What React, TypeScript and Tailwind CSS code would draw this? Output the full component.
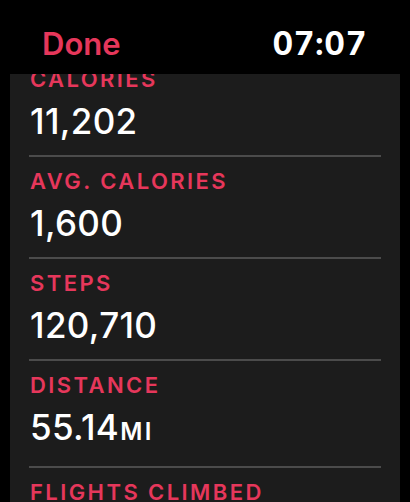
import React from "react";

const rows: { label: string; value: string; unit?: string }[] = [
  { label: "CALORIES", value: "11,202" },
  { label: "AVG. CALORIES", value: "1,600" },
  { label: "STEPS", value: "120,710" },
  { label: "DISTANCE", value: "55.14", unit: "MI" },
  { label: "FLIGHTS CLIMBED", value: "86" },
];

export default function App() {
  return (
    <div
      className="w-[410px] h-[502px] bg-black flex flex-col overflow-hidden"
      style={{ fontFamily: "Inter, 'Noto Sans', sans-serif" }}
    >
      <header className="h-[74px] shrink-0 flex items-start justify-between pl-[42px] pr-[43px] pt-[26px]">
        <span className="text-[31px] leading-[36px] font-semibold text-[#e6375b]">Done</span>
        <span className="text-[32px] leading-[36px] font-bold tracking-[0.02em] text-white tabular-nums">07:07</span>
      </header>
      <div className="mx-[10px] flex-1 bg-[#1c1c1c] overflow-hidden">
        <div className="-mt-[19px] px-[19px]">
          {rows.map((r) => (
            <div key={r.label} className="pt-[11px] pb-[14px] border-b-2 border-[#4b4b4b]">
              <div className="pl-[1px] text-[22px] leading-[26px] font-semibold tracking-[0.11em] text-[#e6375b]">
                {r.label}
              </div>
              <div className="mt-[9px] pl-[1px] text-[35px] leading-[40px] font-medium tracking-[0.01em] text-white">
                {r.value}
                {r.unit && (
                  <span className="ml-[1px] text-[24px] font-semibold tracking-[0.1em]">{r.unit}</span>
                )}
              </div>
            </div>
          ))}
        </div>
      </div>
    </div>
  );
}
